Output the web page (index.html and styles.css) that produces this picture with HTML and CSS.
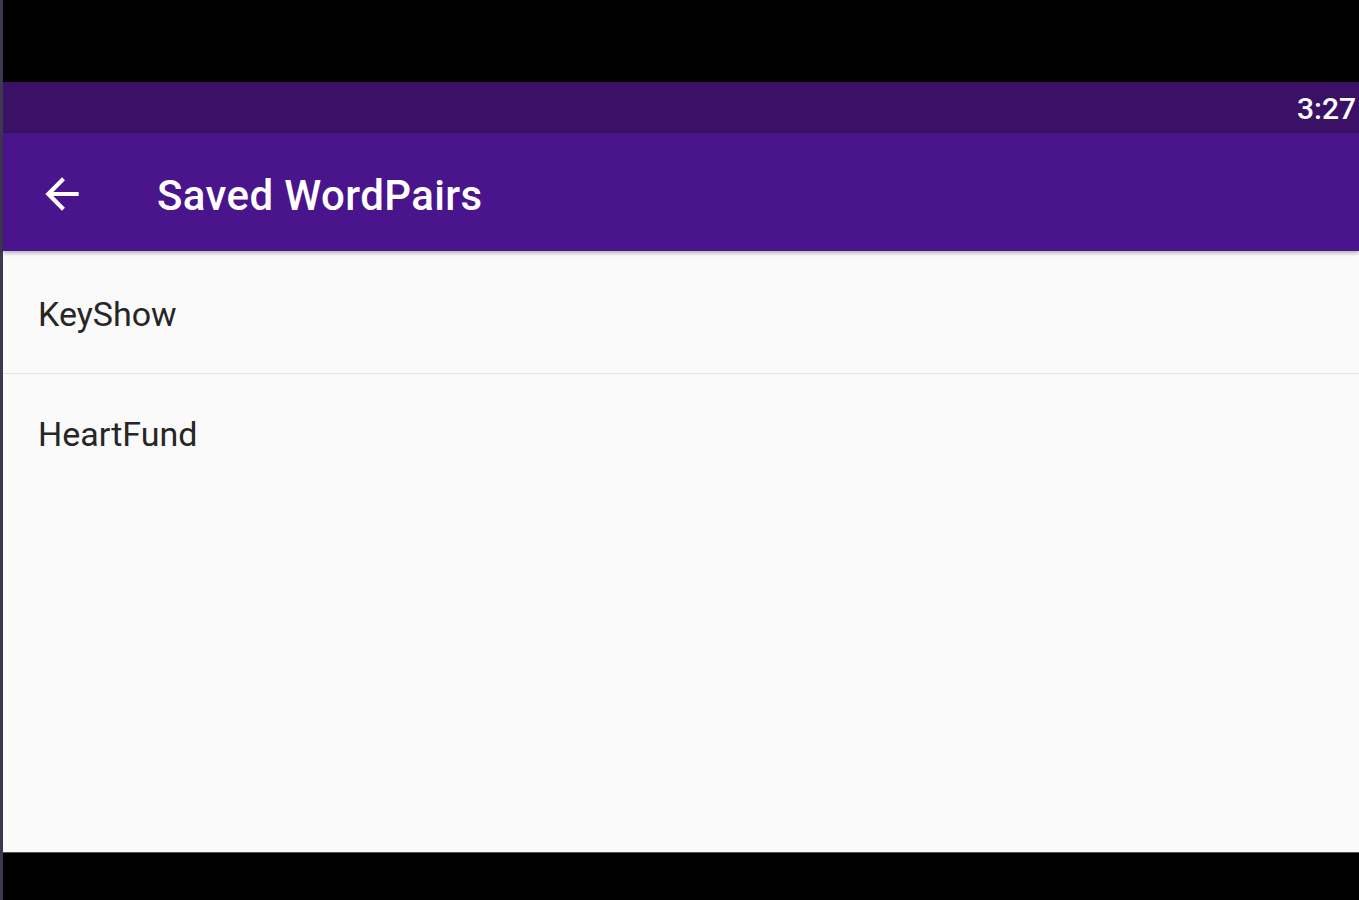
FILE: index.html
```html
<!DOCTYPE html>
<html lang="en">
<head>
<meta charset="UTF-8">
<title>Saved WordPairs</title>
<link rel="stylesheet" href="styles.css">
</head>
<body>
  <div class="frame">
    <div class="top-black"></div>
    <div class="status-bar">
      <span class="clock">3:27</span>
    </div>
    <header class="app-bar">
      <svg class="back" width="50" height="50" viewBox="0 0 24 24">
        <path d="M20 11H7.83l5.59-5.59L12 4l-8 8 8 8 1.41-1.41L7.83 13H20v-2z" fill="#fff"/>
      </svg>
      <h1 class="title">Saved WordPairs</h1>
    </header>
    <main class="list">
      <div class="row">KeyShow</div>
      <div class="row">HeartFund</div>
    </main>
    <div class="bottom-black"></div>
  </div>
</body>
</html>
```

FILE: styles.css
```css
html, body {
  margin: 0;
  height: 100%;
}
body {
  font-family: Roboto, "Noto Sans", sans-serif;
  background: #000;
  overflow: hidden;
}
.frame {
  display: flex;
  flex-direction: column;
  height: 900px;
  border-left: 3px solid #3d3852;
}
.top-black {
  height: 82px;
  background: #000;
}
.status-bar {
  height: 51px;
  background: #3a1166;
  display: flex;
  justify-content: flex-end;
  align-items: center;
  padding-right: 3px;
}
.clock {
  color: #fff;
  font-size: 30px;
  font-weight: 500;
  margin-top: 2px;
}
.app-bar {
  height: 118px;
  background: #4a148c;
  display: flex;
  align-items: center;
  box-shadow: 0 2px 4px rgba(0,0,0,0.3);
  position: relative;
  z-index: 1;
}
.back {
  margin-left: 34px;
  margin-top: 4px;
}
.title {
  margin: 6px 0 0 70px;
  color: #fff;
  font-size: 42px;
  font-weight: 500;
  letter-spacing: 0.4px;
}
.list {
  flex: 1;
  background: #fafafa;
  padding-top: 3px;
}
.row {
  height: 120px;
  box-sizing: border-box;
  padding-left: 35px;
  display: flex;
  align-items: center;
  font-size: 34px;
  color: #262626;
  border-bottom: 1px solid #e4e4e4;
}
.row:last-child {
  border-bottom: none;
}
.bottom-black {
  height: 47px;
  background: #000;
  border-top: 1px solid #555;
}
```
